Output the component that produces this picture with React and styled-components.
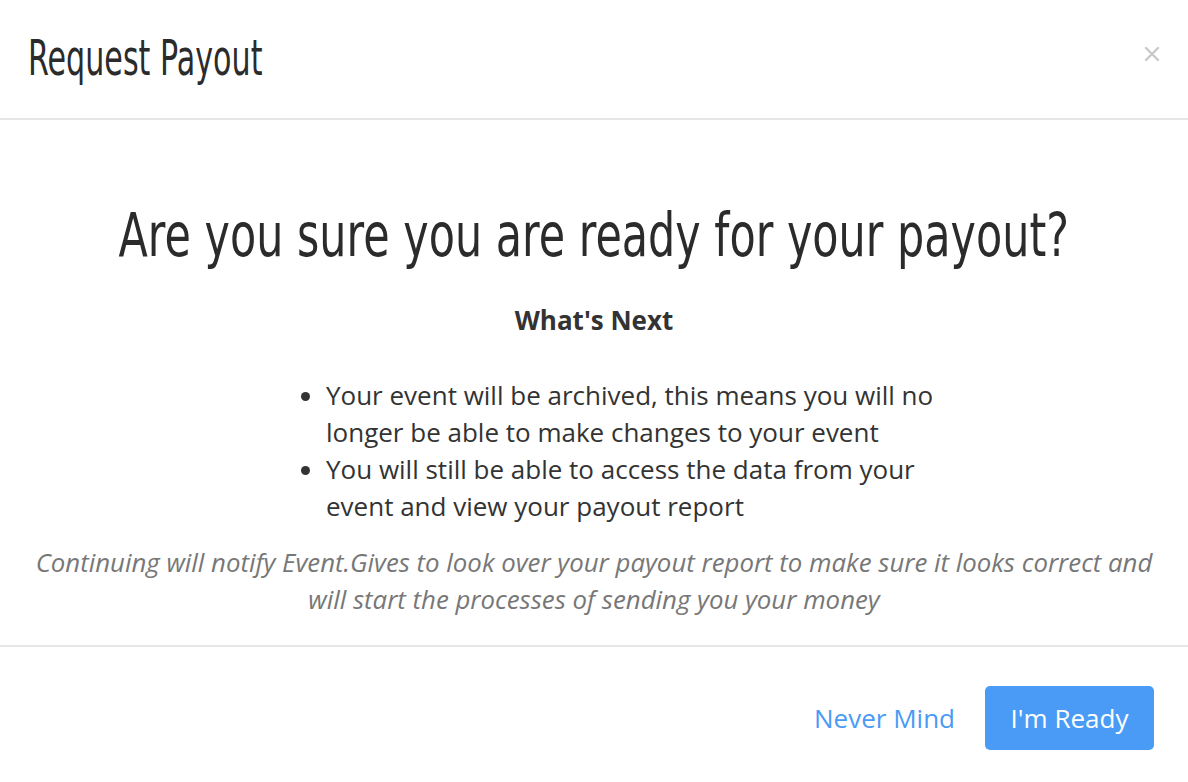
import React from "react"
import styled, { createGlobalStyle } from "styled-components"

const GlobalStyle = createGlobalStyle`
  html, body {
    margin: 0;
    padding: 0;
    background: #fff;
  }
  body {
    font-family: "Open Sans", "Liberation Sans", sans-serif;
    color: #333;
  }
`

const Modal = styled.div`
  width: 1188px;
  height: 782px;
  display: flex;
  flex-direction: column;
  background: #fff;
`

const Header = styled.div`
  flex-shrink: 0;
  height: 120px;
  display: flex;
  align-items: flex-start;
  justify-content: space-between;
  padding: 31px 28px 0;
  border-bottom: 2px solid #e6e6e6;
  box-sizing: border-box;
`

// condensed display face (stand-in for Oswald)
const Title = styled.h2`
  margin: 0;
  font-family: "DejaVu Sans", sans-serif;
  font-weight: 400;
  font-size: 49px;
  line-height: 56px;
  color: #2b2b2b;
  white-space: nowrap;
  transform: scaleX(0.615);
  transform-origin: left center;
`

const Close = styled.button`
  border: none;
  background: none;
  padding: 0;
  margin-top: 15px;
  margin-right: -4px;
  width: 24px;
  height: 16px;
  display: flex;
  align-items: center;
  justify-content: center;
  cursor: pointer;
`

const Body = styled.div`
  flex: 1;
  min-height: 0;
  display: flex;
  flex-direction: column;
  align-items: center;
  padding: 79px 34px 0;
  border-bottom: 2px solid #e6e6e6;
  box-sizing: border-box;
`

const Question = styled.h1`
  margin: 0;
  font-family: "DejaVu Sans", sans-serif;
  font-weight: 400;
  font-size: 60px;
  line-height: 72px;
  color: #2b2b2b;
  white-space: nowrap;
  transform: scaleX(0.715);
`

const Subhead = styled.h3`
  margin: 31px 0 0;
  font-size: 26px;
  font-weight: 700;
  line-height: 36px;
  color: #333;
`

const List = styled.ul`
  align-self: flex-start;
  margin: 39px 0 0 252px;
  padding-left: 40px;
  width: 620px;
  font-size: 26px;
  line-height: 37px;
  color: #333;
`

const Note = styled.p`
  margin: 19px -12px 0;
  text-align: center;
  font-style: italic;
  font-size: 25.8px;
  line-height: 37px;
  color: #777;
`

const Footer = styled.div`
  flex-shrink: 0;
  height: 135px;
  display: flex;
  align-items: flex-start;
  justify-content: flex-end;
  gap: 30px;
  padding: 39px 34px 0;
  box-sizing: border-box;
`

const LinkButton = styled.button`
  border: none;
  background: none;
  font-family: inherit;
  font-size: 26px;
  color: #4a9bf5;
  padding: 0;
  height: 64px;
  cursor: pointer;
`

const PrimaryButton = styled.button`
  border: none;
  background: #4a9bf5;
  color: #fff;
  font-family: inherit;
  font-size: 26px;
  width: 169px;
  height: 64px;
  border-radius: 5px;
  cursor: pointer;
`

export default function App() {
  return (
    <>
      <GlobalStyle />
      <Modal>
        <Header>
          <Title>Request Payout</Title>
          <Close aria-label="Close">
            <svg width="16" height="16" viewBox="0 0 16 16">
              <path d="M2 2 L14 14 M14 2 L2 14" stroke="#c9c9c9" strokeWidth="2.4" strokeLinecap="round" />
            </svg>
          </Close>
        </Header>
        <Body>
          <Question>Are you sure you are ready for your payout?</Question>
          <Subhead>What's Next</Subhead>
          <List>
            <li>Your event will be archived, this means you will no longer be able to make changes to your event</li>
            <li>You will still be able to access the data from your event and view your payout report</li>
          </List>
          <Note>
            Continuing will notify Event.Gives to look over your payout report to make sure it looks correct and will start the processes of sending you your money
          </Note>
        </Body>
        <Footer>
          <LinkButton>Never Mind</LinkButton>
          <PrimaryButton>I'm Ready</PrimaryButton>
        </Footer>
      </Modal>
    </>
  )
}
